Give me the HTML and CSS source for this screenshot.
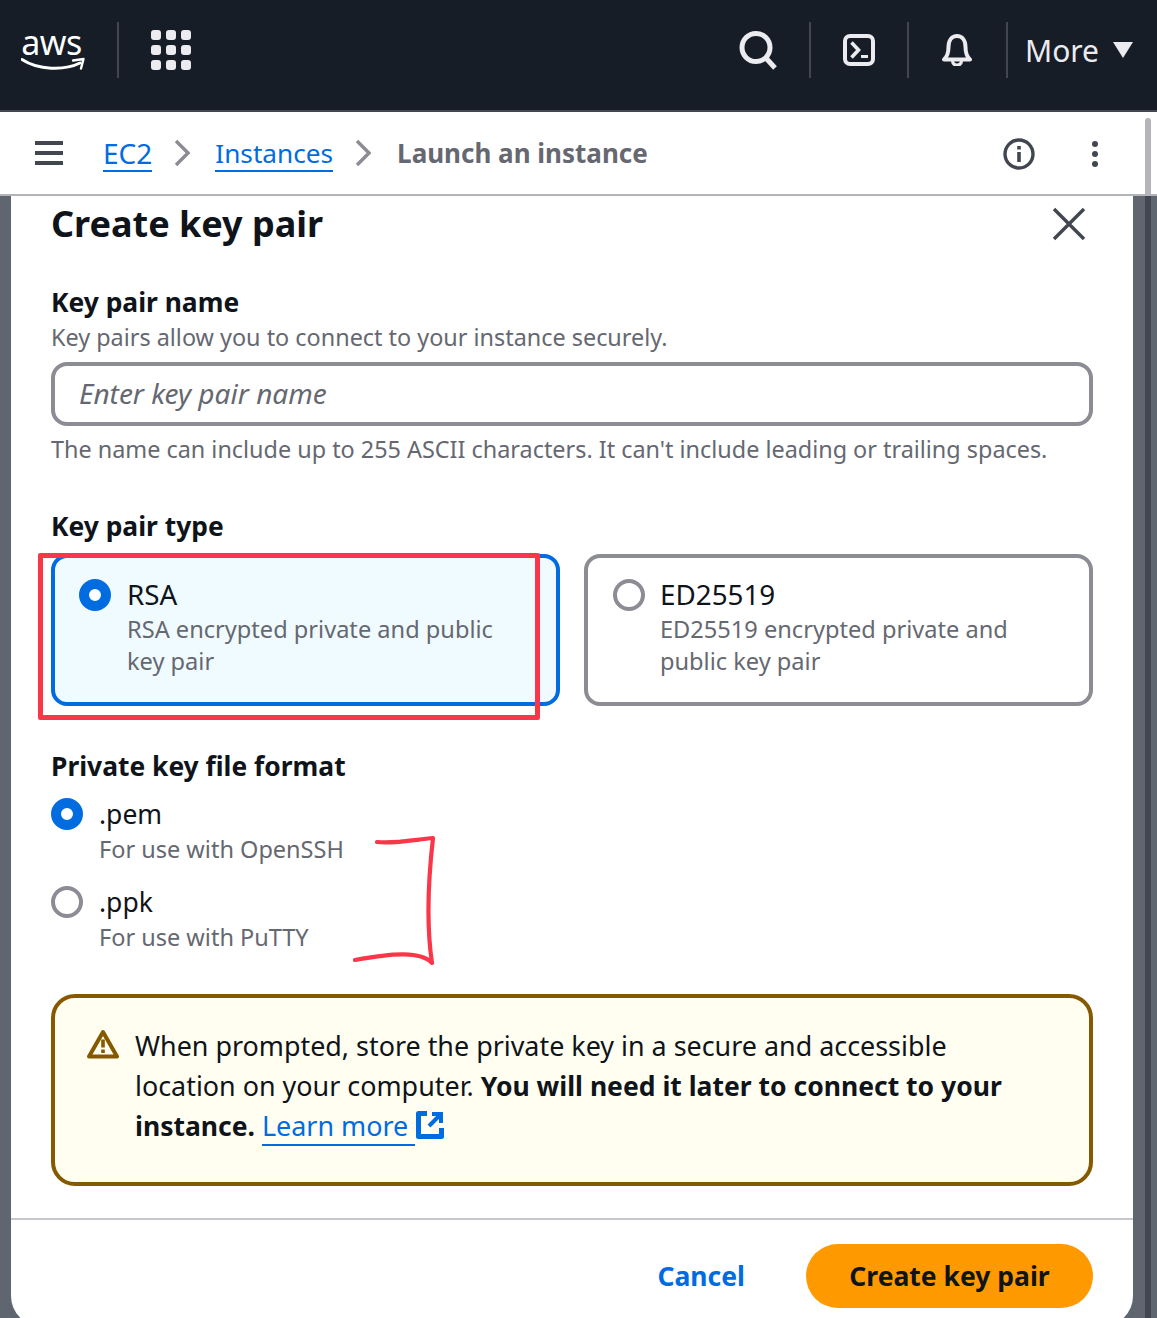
FILE: index.html
```html
<!DOCTYPE html>
<html>
<head>
    <title>Create key pair</title>
    <link rel="stylesheet" href="styles.css">
</head>
<body>
    <header class="topbar">
        <div class="logo">
            <span class="logo-text">aws</span>
            <svg class="logo-smile" viewBox="0 0 64 16" width="64" height="16">
                <path d="M1 2.500C17 13 43 14 59 6" fill="none" stroke="#fff" stroke-width="3" stroke-linecap="round"/>
                <path d="M52 3.500L62.500 2L60 11.500" fill="none" stroke="#fff" stroke-width="2.400" stroke-linejoin="round" stroke-linecap="round"/>
            </svg>
        </div>
        <div class="sep sep-logo"></div>
        <div class="apps">
            <i></i><i></i><i></i><i></i><i></i><i></i><i></i><i></i><i></i>
        </div>
        <div class="topbar-right">
            <svg class="top-icon" viewBox="0 0 40 40" width="40" height="40">
                <circle cx="17" cy="17.500" r="14" fill="none" stroke="#ebebf0" stroke-width="5"/>
                <path d="M26 27L36 38" stroke="#ebebf0" stroke-width="5"/>
            </svg>
            <div class="sep"></div>
            <svg class="top-icon" viewBox="0 0 32 32" width="32" height="32">
                <rect x="2" y="2" width="28" height="28" rx="5" fill="none" stroke="#ebebf0" stroke-width="4"/>
                <path d="M8.500 8.500L15.500 16L8.500 23.500" fill="none" stroke="#ebebf0" stroke-width="3.600"/>
                <path d="M18 22.500H25" stroke="#ebebf0" stroke-width="3"/>
            </svg>
            <div class="sep"></div>
            <svg class="top-icon" viewBox="0 0 30 32" width="30" height="32">
                <path d="M2 25.500C6 22 6.500 18 6.500 13C6.500 6 10 2 15 2S23.500 6 23.500 13C23.500 18 24 22 28 25.500Z" fill="none" stroke="#ebebf0" stroke-width="4" stroke-linejoin="round"/>
                <path d="M10.500 27C11 32.500 19 32.500 19.500 27" fill="none" stroke="#ebebf0" stroke-width="3.200"/>
            </svg>
            <div class="sep"></div>
            <span class="more">More</span>
            <svg class="caret" viewBox="0 0 20 16" width="20" height="16"><path d="M0 0H20L10 16Z" fill="#ebebf0"/></svg>
        </div>
    </header>

    <nav class="crumbbar">
        <div class="burger"><i></i><i></i><i></i></div>
        <a class="crumb-link crumb-first">EC2</a>
        <svg class="chevron" viewBox="0 0 16 28" width="16" height="28"><path d="M2 2L14 14L2 26" fill="none" stroke="#8c8c94" stroke-width="3.400"/></svg>
        <a class="crumb-link">Instances</a>
        <svg class="chevron" viewBox="0 0 16 28" width="16" height="28"><path d="M2 2L14 14L2 26" fill="none" stroke="#8c8c94" stroke-width="3.400"/></svg>
        <span class="crumb-current">Launch an instance</span>
        <svg class="info" viewBox="0 0 32 32" width="32" height="32">
            <circle cx="16" cy="16" r="14" fill="none" stroke="#424650" stroke-width="3.400"/>
            <path d="M16 14V24" stroke="#424650" stroke-width="3.600"/>
            <path d="M16 8V11.500" stroke="#424650" stroke-width="3.600"/>
        </svg>
        <div class="dots"><i></i><i></i><i></i></div>
    </nav>

    <div class="backdrop">
        <main class="modal">
            <div class="modal-head">
                <h1>Create key pair</h1>
                <svg viewBox="0 0 34 34" width="34" height="34"><path d="M2 2L32 32M32 2L2 32" stroke="#424650" stroke-width="3.400"/></svg>
            </div>

            <section class="field field-name">
                <h2>Key pair name</h2>
                <p class="hint">Key pairs allow you to connect to your instance securely.</p>
                <div class="input">Enter key pair name</div>
                <p class="hint">The name can include up to 255 ASCII characters. It can't include leading or trailing spaces.</p>
            </section>

            <section class="field field-type">
                <h2>Key pair type</h2>
                <div class="cards">
                    <div class="card card-on">
                        <span class="radio radio-on"></span>
                        <div>
                            <div class="opt">RSA</div>
                            <p class="hint">RSA encrypted private and public key pair</p>
                        </div>
                    </div>
                    <div class="card card-off">
                        <span class="radio"></span>
                        <div>
                            <div class="opt">ED25519</div>
                            <p class="hint">ED25519 encrypted private and public key pair</p>
                        </div>
                    </div>
                </div>
            </section>

            <section class="field field-format">
                <h2>Private key file format</h2>
                <div class="format-row">
                    <span class="radio radio-on"></span>
                    <div>
                        <div class="opt">.pem</div>
                        <p class="hint">For use with OpenSSH</p>
                    </div>
                </div>
                <div class="format-row">
                    <span class="radio"></span>
                    <div>
                        <div class="opt">.ppk</div>
                        <p class="hint">For use with PuTTY</p>
                    </div>
                </div>
            </section>

            <div class="alert">
                <svg class="alert-icon" viewBox="0 0 32 30" width="32" height="30">
                    <path d="M16 3L30 27.500H2Z" fill="none" stroke="#855900" stroke-width="4" stroke-linejoin="round"/>
                    <path d="M16 10.500V18.500M16 20.500V24" stroke="#855900" stroke-width="3.600"/>
                </svg>
                <p class="alert-text">When prompted, store the private key in a secure and accessible location on your computer. <b>You will need it later to connect to your instance.</b> <a class="learn">Learn more </a><svg class="external" viewBox="0 0 28 28" width="28" height="28">
                    <path d="M11 2.500H2.500V25.500H25.500V17" fill="none" stroke="#006ce0" stroke-width="5" stroke-linejoin="round"/>
                    <path d="M16 3H25V12M25 3L13 15" fill="none" stroke="#006ce0" stroke-width="4"/>
                </svg></p>
            </div>

            <footer class="modal-foot">
                <a class="cancel">Cancel</a>
                <button class="primary">Create key pair</button>
            </footer>
        </main>
        <div class="track"></div>
    </div>

    <div class="scroll-thumb"></div>

    <div class="mark-box"></div>
    <svg class="mark-bracket" viewBox="0 0 90 135" width="90" height="135">
        <path d="M24 9C40 11 60 7 80 5C76 40 73 90 79 130C68 118 40 120 2 127" fill="none" stroke="#fb3649" stroke-width="4.200" stroke-linecap="round" stroke-linejoin="round"/>
    </svg>
</body>
</html>
```

FILE: styles.css
```css
* {
    box-sizing: border-box;
}
html, body {
    height: 1318px;
    overflow: hidden;
}
body {
    margin: 0;
    position: relative;
    font-family: "Noto Sans", Arial, sans-serif;
    color: #0f141a;
    background-color: #5f6670;
}
h1, h2, p {
    margin: 0;
}

/* top navigation */
.topbar {
    height: 112px;
    background-color: #161d26;
    border-bottom: 2px solid #424650;
    display: flex;
    align-items: center;
    padding: 0 24px 10px 21px;
}
.logo {
    width: 64px;
    display: flex;
    flex-direction: column;
    align-items: center;
}
.logo-text {
    color: #fff;
    font-size: 34px;
    line-height: 30px;
    height: 30px;
    letter-spacing: -0.5px;
    margin-left: -3px;
}
.sep {
    width: 2px;
    height: 56px;
    background-color: #424650;
}
.sep-logo {
    margin-left: 32px;
}
.apps {
    margin-left: 32px;
    display: grid;
    grid-template-columns: repeat(3, 10px);
    gap: 5px;
}
.apps i {
    width: 10px;
    height: 10px;
    border-radius: 3px;
    background-color: #ebebf0;
}
.topbar-right {
    margin-left: auto;
    display: flex;
    align-items: center;
}
.topbar-right .sep:nth-of-type(1) {
    margin-left: 30px;
}
.top-icon:nth-of-type(2) {
    margin: 0 32px;
}
.top-icon:nth-of-type(3) {
    margin: 0 34px 0 33px;
}
.more {
    color: #ebebf0;
    font-size: 30px;
    margin-left: 17px;
}
.caret {
    margin-left: 14px;
}

/* breadcrumb bar */
.crumbbar {
    height: 84px;
    background-color: #fff;
    border-bottom: 2px solid #b4b4bb;
    display: flex;
    align-items: center;
    padding: 0 0 0 35px;
    position: relative;
}
.burger {
    width: 28px;
    display: grid;
    gap: 6px;
    margin-right: 40px;
}
.burger i {
    height: 4px;
    background-color: #424650;
}
.crumb-link {
    color: #006ce0;
    font-size: 26.200px;
    line-height: 34px;
    margin-top: 2px;
    border-bottom: 2px solid #006ce0;
}
.crumb-first {
    font-size: 28px;
}
.chevron {
    margin: 0 25px 0 22px;
}
.crumb-current {
    color: #656871;
    font-size: 26px;
    font-weight: 700;
    margin-left: 1px;
}
.info {
    margin-left: auto;
    margin-top: 2px;
    margin-right: 57px;
}
.dots {
    display: grid;
    gap: 4px;
    margin-top: 1px;
    margin-right: 59px;
}
.dots i {
    width: 6px;
    height: 6px;
    border-radius: 50%;
    background-color: #424650;
}

/* dialog */
.backdrop {
    display: flex;
    height: 1122px;
    padding-left: 11px;
    position: relative;
}
.modal {
    width: 1122px;
    height: 1130px;
    background-color: #fff;
    border-radius: 0 0 30px 30px;
    padding: 0 40px;
    display: flex;
    flex-direction: column;
}
.track {
    position: absolute;
    right: 6px;
    top: 0;
    bottom: 0;
    width: 6px;
    background-color: #424650;
}
.modal-head {
    height: 56px;
    display: flex;
    align-items: center;
    justify-content: space-between;
    padding-right: 7px;
}
.modal-head h1 {
    font-size: 36px;
    font-weight: 700;
    line-height: 56px;
}
.field h2 {
    font-size: 26.400px;
    font-weight: 700;
    line-height: 36px;
}
.hint {
    color: #656871;
    font-size: 23.400px;
    line-height: 32px;
}
.field-name {
    margin-top: 32px;
}
.field-name h2 {
    margin-bottom: 1px;
}
.input {
    height: 64px;
    margin: 9px 0 7px;
    border: 4px solid #8c8c94;
    border-radius: 16px;
    padding: 0 0 2px 24px;
    display: flex;
    align-items: center;
    font-size: 28px;
    font-style: italic;
    color: #656871;
}
.field-type {
    margin-top: 43px;
}
.cards {
    display: grid;
    grid-template-columns: 1fr 1fr;
    gap: 24px;
    margin-top: 10px;
}
.card {
    height: 152px;
    border: 4px solid #8c8c94;
    border-radius: 16px;
    padding: 19px 24px;
    display: flex;
    gap: 16px;
}
.card-on {
    background-color: #f0fbff;
    border-color: #006ce0;
}
.card-off {
    gap: 15px;
}
.card-off .radio {
    margin-left: 1px;
}
.card .opt {
    font-size: 27.800px;
    margin: -1px 0 1px;
}
.card .hint {
    font-size: 23.600px;
    max-width: 380px;
}
.radio {
    flex: none;
    width: 32px;
    height: 32px;
    border-radius: 50%;
    border: 4px solid #8c8c94;
    background-color: #fff;
    margin-top: 2px;
}
.radio-on {
    border: 10px solid #006ce0;
}
.opt {
    font-size: 26.500px;
    line-height: 36px;
}
.field-format {
    margin-top: 42px;
}
.format-row {
    display: flex;
    gap: 16px;
    margin-top: 12px;
    height: 76px;
}
.format-row .opt {
    margin-bottom: 1px;
}
.format-row .hint {
    font-size: 23.500px;
}
.alert {
    margin-top: 34px;
    height: 192px;
    background-color: #fffef0;
    border: 4px solid #855900;
    border-radius: 24px;
    padding: 28px 32px;
    display: flex;
    gap: 16px;
    font-size: 26.900px;
    line-height: 40px;
}
.alert-icon {
    flex: none;
    margin-top: 3px;
}
.alert-text {
    max-width: 880px;
}
.alert b {
    font-size: 26.500px;
    font-weight: 700;
}
.learn {
    color: #006ce0;
    border-bottom: 2px solid #006ce0;
    white-space: pre;
}
.external {
    vertical-align: -3px;
    margin-left: 1px;
}
.modal-foot {
    margin: 32px -40px 0;
    border-top: 2px solid #c6c6cd;
    padding: 24px 40px 0;
    display: flex;
    justify-content: flex-end;
    align-items: center;
    gap: 61px;
}
.cancel {
    color: #006ce0;
    font-size: 26.500px;
    font-weight: 700;
}
.primary {
    width: 287px;
    height: 64px;
    border: none;
    border-radius: 32px;
    background-color: #ff9900;
    color: #0f141a;
    font-family: inherit;
    font-size: 26.500px;
    font-weight: 700;
}

/* page scrollbar and hand drawn marks */
.scroll-thumb {
    position: absolute;
    top: 118px;
    right: 6px;
    width: 6px;
    height: 78px;
    border-radius: 3px 3px 0 0;
    background-color: #b4b4bb;
}
.mark-box {
    position: absolute;
    left: 38px;
    top: 553px;
    width: 502px;
    height: 167px;
    border: 5px solid #fb3649;
    border-radius: 2px;
}
.mark-bracket {
    position: absolute;
    left: 353px;
    top: 833px;
}
```
